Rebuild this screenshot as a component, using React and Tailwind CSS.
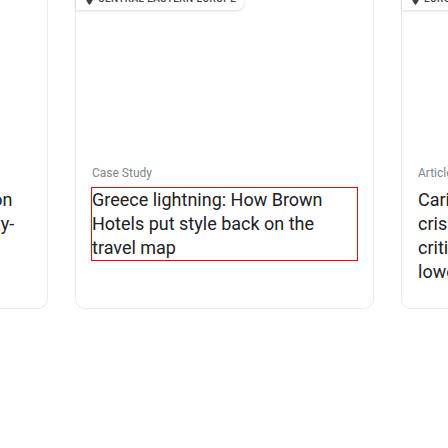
import React from 'react';

const PinIcon = () => (
  <svg width="7" height="10" viewBox="0 0 14 20" className="shrink-0 text-[#3c4043]">
    <path fill="currentColor" d="M7 0C3.13 0 0 3.13 0 7c0 5.25 7 13 7 13s7-7.75 7-13c0-3.87-3.13-7-7-7z" />
  </svg>
);

const Card = ({ region, label, title, outlined }) => (
  <div className="relative shrink-0 w-[299px] h-[330px] bg-white border border-[#e8eaed] rounded-[10px] flex flex-col font-['Roboto',sans-serif]">
    <div className="h-[30px] shrink-0 relative">
      {region && (
        <div className="absolute left-0 bottom-0 h-[30px] bg-white rounded-br-[8px] shadow-[0_1px_3px_rgba(60,64,67,0.2)] flex items-end pb-[5px] pl-[10px] pr-[8px] gap-[5px]">
          <PinIcon />
          <span className="text-[10px] font-medium tracking-[0.4px] uppercase text-[#3c4043] leading-[12px]">{region}</span>
        </div>
      )}
    </div>
    <div className="px-4 pt-[155px]">
      <p className="text-[12px] leading-[16px] text-[#80868b]">{label}</p>
      <h3 className={`mt-[7px] text-[18px] leading-[24px] text-[#202124] ${outlined ? 'outline outline-1 outline-[#ff0000]' : ''}`}>
        {title}
      </h3>
    </div>
  </div>
);

const App = () => {
  return (
    <div className="w-[448px] h-[448px] overflow-hidden bg-white">
      <div className="flex gap-[27px] -ml-[251px] -mt-[21px]">
        <Card
          region="Asia Pacific"
          label="Article"
          title={<>Keeping it local: How a London<br />shop built a strong community-<br />led following</>}
        />
        <Card
          region="Central Eastern Europe"
          label="Case Study"
          title="Greece lightning: How Brown Hotels put style back on the travel map"
          outlined
        />
        <Card
          region="Europe"
          label="Article"
          title={<>Caring brands in a time of<br />crisis: How to respond to<br />criticism and keep trust<br />lower the stakes</>}
        />
      </div>
    </div>
  );
};

export default App;
